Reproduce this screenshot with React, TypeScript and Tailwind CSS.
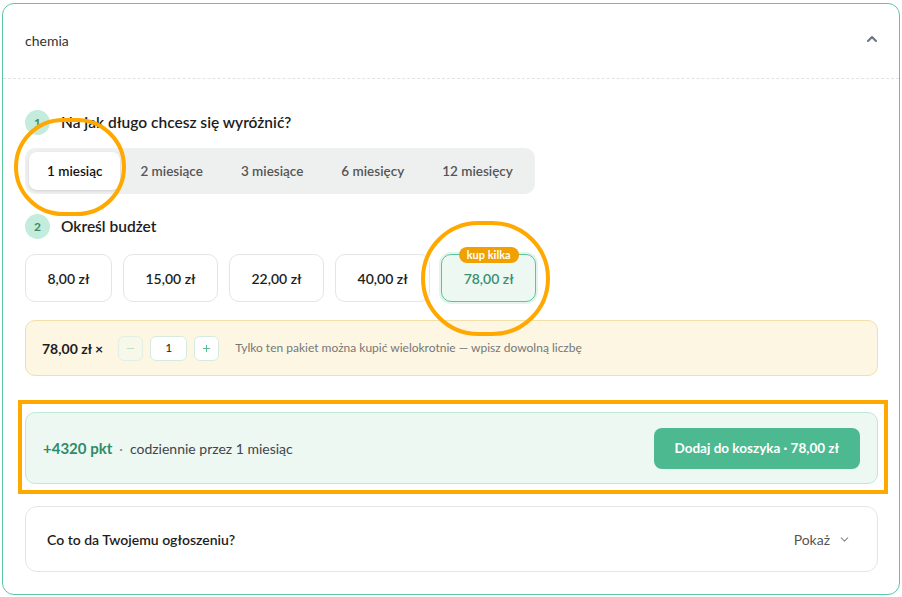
import { ChevronDown, ChevronUp, Minus, Plus } from 'lucide-react';

const durations = ['1 miesiąc', '2 miesiące', '3 miesiące', '6 miesięcy', '12 miesięcy'];
const budgets = ['8,00 zł', '15,00 zł', '22,00 zł', '40,00 zł', '78,00 zł'];

const StepTitle = ({ n, title }: { n: number; title: string }) => (
  <div className="flex items-center gap-[11px]">
    <span className="flex h-[25px] w-[25px] items-center justify-center rounded-full bg-[#c3ecdc] text-[12px] font-bold text-[#3a8a6a]">
      {n}
    </span>
    <span className="text-[15.5px] font-semibold text-[#1d1d1d]">{title}</span>
  </div>
);

const App = () => {
  return (
    <div
      className="relative h-[597px] w-[902px] bg-white p-[3px_2px_2px_2px]"
      style={{ fontFamily: 'Lato, "Noto Sans", sans-serif' }}
    >
      <div className="flex h-[592px] flex-col rounded-[12px] border border-[#5cc8a0] bg-white">
        {/* header */}
        <div className="flex h-[75px] items-center justify-between border-b border-dashed border-[#e3e3e3] px-[22px]">
          <span className="mt-[-2px] text-[14px] text-[#333]">chemia</span>
          <ChevronUp size={16} strokeWidth={3} className="mr-[-3px] mt-[-4px] text-[#6b7280]" />
        </div>

        <div className="flex flex-col pl-[22px] pr-[21px] pt-[31px]">
          <StepTitle n={1} title="Na jak długo chcesz się wyróżnić?" />

          <div className="mt-[13px] flex w-fit gap-[2px] rounded-[10px] bg-[#eef0ef] p-[4px]">
            {durations.map((d, i) => (
              <div
                key={d}
                className={
                  i === 0
                    ? 'flex h-[38px] items-center rounded-[8px] bg-white px-[18px] text-[13.5px] font-semibold text-[#111] shadow-sm'
                    : 'flex h-[38px] items-center px-[18px] text-[13.5px] font-semibold text-[#555]'
                }
              >
                {d}
              </div>
            ))}
          </div>

          <div className="mt-[20px]">
            <StepTitle n={2} title="Określ budżet" />
          </div>

          <div className="mt-[15px] flex gap-[11px]">
            {budgets.map((b, i) =>
              i === 4 ? (
                <div
                  key={b}
                  className="relative flex h-[48px] items-center rounded-[10px] border border-[#5cc49b] bg-[#edf8f3] px-[21.5px] text-[14px] font-semibold text-[#3b8f6f] shadow-[0_0_0_2px_#e2f4ec]"
                >
                  {b}
                  <span className="absolute left-1/2 top-[-8px] -translate-x-1/2 whitespace-nowrap rounded-full bg-[#f0a000] px-[8px] py-[1px] text-[11px] font-bold leading-[14px] text-white">
                    kup kilka
                  </span>
                </div>
              ) : (
                <div
                  key={b}
                  className="flex h-[48px] items-center rounded-[10px] border border-[#e5e5e5] bg-white px-[21.5px] text-[14px] font-semibold text-[#1d1d1d]"
                >
                  {b}
                </div>
              )
            )}
          </div>

          <div className="mt-[18px] flex h-[56px] items-center rounded-[10px] border border-[#f2e0a8] bg-[#fdf6e3] px-[16px]">
            <span className="text-[14px] font-bold text-[#1d1d1d]">78,00 zł ×</span>
            <div className="ml-[15px] flex items-center gap-[7px]">
              <span className="flex h-[25px] w-[25px] items-center justify-center rounded-[6px] border border-[#e3efe4] bg-[#f7f8ea] text-[#b6dcc6]">
                <Minus size={11} strokeWidth={2} />
              </span>
              <span className="flex h-[25px] w-[37px] items-center justify-center rounded-[6px] border border-[#d6ebe0] bg-white text-[12px] text-[#222]">
                1
              </span>
              <span className="flex h-[25px] w-[25px] items-center justify-center rounded-[6px] border border-[#d6ebe0] bg-white text-[#4cb991]">
                <Plus size={11} strokeWidth={2} />
              </span>
            </div>
            <span className="ml-[16px] text-[12px] text-[#777]">
              Tylko ten pakiet można kupić wielokrotnie — wpisz dowolną liczbę
            </span>
          </div>

          <div className="mt-[36px] flex h-[72px] items-center justify-between rounded-[10px] border border-[#bfe8d6] bg-[#edf8f3] pl-[17px] pr-[17px]">
            <div className="flex items-center text-[14px]">
              <span className="text-[15px] font-bold text-[#2f8a68]">+4320 pkt</span>
              <span className="mx-[7px] text-[#888]">·</span>
              <span className="text-[#444]">codziennie przez 1 miesiąc</span>
            </div>
            <button className="flex h-[41px] items-center rounded-[8px] bg-[#4cb991] px-[21px] text-[13.5px] font-bold text-white">
              Dodaj do koszyka · 78,00 zł
            </button>
          </div>

          <div className="mt-[22px] flex h-[66px] items-center justify-between rounded-[12px] border border-[#e5e5e5] bg-white px-[21px]">
            <span className="text-[14px] font-semibold text-[#1d1d1d]">Co to da Twojemu ogłoszeniu?</span>
            <div className="flex items-center gap-[8px] pr-[5px] text-[14px] text-[#555]">
              Pokaż
              <ChevronDown size={13} className="text-[#888]" />
            </div>
          </div>
        </div>
      </div>

      {/* annotation overlays */}
      <div className="pointer-events-none absolute left-[14px] top-[118px] h-[98px] w-[112px] rounded-full border-[4px] border-[#ffa800]" />
      <div className="pointer-events-none absolute left-[421px] top-[221px] h-[115px] w-[129px] rounded-full border-[4px] border-[#ffa800]" />
      <div className="pointer-events-none absolute left-[18px] top-[400px] h-[94px] w-[870px] border-[4px] border-[#ffa800]" />
    </div>
  );
};

export default App;
